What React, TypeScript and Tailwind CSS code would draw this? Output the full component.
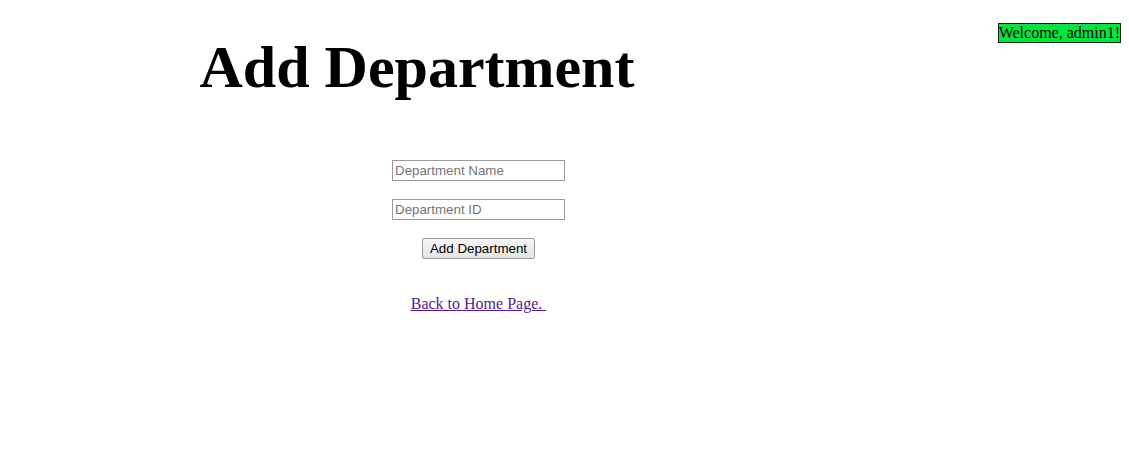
import React from 'react';

const serif = { fontFamily: '"Liberation Serif", "Times New Roman", serif' };
const sans = { fontFamily: '"Liberation Sans", Arial, sans-serif' };

const App = () => {
  return (
    <div className="relative min-h-[468px] w-full bg-white text-black" style={serif}>
      {/* welcome badge */}
      <div className="absolute right-[8px] top-[23px] border border-[#1a1a1a] bg-[#00e63f] text-[16px] leading-[18px] text-black">
        Welcome, admin1!
      </div>

      <div className="w-[834px] pt-[33px] text-center">
        <h1 className="text-[60px] font-bold leading-[69px]">Add Department</h1>
      </div>

      <form
        className="mt-[58px] flex w-[957px] flex-col items-center"
        onSubmit={(e) => e.preventDefault()}
      >
        <input
          type="text"
          placeholder="Department Name"
          className="h-[21px] w-[173px] border border-[#9a9a9a] px-[2px] text-[13.33px] placeholder:text-[#757575] outline-none"
          style={sans}
        />
        <input
          type="text"
          placeholder="Department ID"
          className="mt-[18px] h-[21px] w-[173px] border border-[#9a9a9a] px-[2px] text-[13.33px] placeholder:text-[#757575] outline-none"
          style={sans}
        />
        <button
          type="submit"
          className="mt-[18px] h-[21px] w-[113px] rounded-[2px] border border-[#9a9a9a] bg-gradient-to-b from-[#f6f6f6] to-[#e4e4e4] text-[13.33px] leading-none text-black"
          style={sans}
        >
          Add Department
        </button>

        <a
          href="#"
          className="mt-[36px] text-[16px] leading-[18px] text-[#551a8b] underline"
        >
          Back to Home Page.&nbsp;
        </a>
      </form>
    </div>
  );
};

export default App;
